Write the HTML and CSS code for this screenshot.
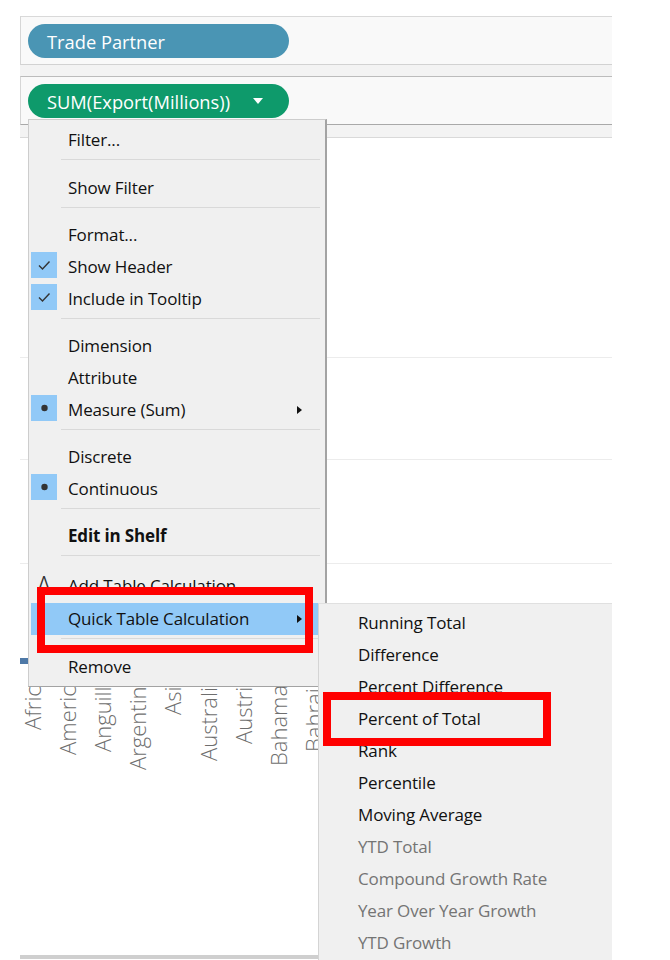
FILE: index.html
```html
<!DOCTYPE html>
<html lang="en">
<head>
<meta charset="utf-8">
<title>Quick Table Calculation</title>
<link rel="stylesheet" href="styles.css">
</head>
<body>
<div class="viz">
  <div class="shelves">
    <div class="shelf shelf-rows">
      <span class="pill pill-dim">Trade Partner</span>
    </div>
    <div class="shelf-gap"></div>
    <div class="shelf shelf-cols">
      <span class="pill pill-meas">SUM(Export(Millions))
        <svg class="pill-caret" width="10" height="6" viewBox="0 0 10 6"><path d="M0 0 L10 0 L5 6 Z" fill="#fff"/></svg>
      </span>
    </div>
    <div class="shelf-gap shelf-gap-last"></div>
  </div>

  <div class="pane">
    <div class="pane-row row-1"></div>
    <div class="pane-row row-2"></div>
    <div class="pane-row row-3"></div>
    <div class="pane-row row-4"><span class="mark"></span></div>
  </div>

  <div class="axis">
    <div class="tick"><span>Africa</span></div>
    <div class="tick"><span>America</span></div>
    <div class="tick"><span>Anguilla</span></div>
    <div class="tick"><span>Argentina</span></div>
    <div class="tick"><span>Asia</span></div>
    <div class="tick"><span>Australia</span></div>
    <div class="tick"><span>Austria</span></div>
    <div class="tick"><span>Bahamas</span></div>
    <div class="tick"><span>Bahrain</span></div>
  </div>
  <div class="hscroll"></div>

  <div class="menu">
    <div class="mi">Filter...</div>
    <div class="sep sep-wide"></div>
    <div class="mi">Show Filter</div>
    <div class="sep"></div>
    <div class="mi">Format...</div>
    <div class="mi"><span class="ico on"><svg width="26" height="26" viewBox="0 0 26 26"><path d="M8 13.5 L11.5 17 L18.5 9.5" fill="none" stroke="#333" stroke-width="1.4"/></svg></span>Show Header</div>
    <div class="mi"><span class="ico on"><svg width="26" height="26" viewBox="0 0 26 26"><path d="M8 13.5 L11.5 17 L18.5 9.5" fill="none" stroke="#333" stroke-width="1.4"/></svg></span>Include in Tooltip</div>
    <div class="sep"></div>
    <div class="mi">Dimension</div>
    <div class="mi">Attribute</div>
    <div class="mi"><span class="ico on"><svg width="26" height="26" viewBox="0 0 26 26"><circle cx="13.5" cy="13" r="3.2" fill="#333"/></svg></span>Measure (Sum)<span class="sub-arrow"></span></div>
    <div class="sep"></div>
    <div class="mi">Discrete</div>
    <div class="mi"><span class="ico on"><svg width="26" height="26" viewBox="0 0 26 26"><circle cx="13.5" cy="13" r="3.2" fill="#333"/></svg></span>Continuous</div>
    <div class="sep"></div>
    <div class="mi mi-bold">Edit in Shelf</div>
    <div class="sep sep-wide"></div>
    <div class="mi mi-tall"><span class="ico delta">Δ</span>Add Table Calculation</div>
    <div class="mi mi-hot">Quick Table Calculation<span class="sub-arrow"></span></div>
    <div class="sep sep-wide"></div>
    <div class="mi">Remove</div>
  </div>

  <div class="submenu">
    <div class="si">Running Total</div>
    <div class="si">Difference</div>
    <div class="si">Percent Difference</div>
    <div class="si">Percent of Total</div>
    <div class="si">Rank</div>
    <div class="si">Percentile</div>
    <div class="si">Moving Average</div>
    <div class="si si-off">YTD Total</div>
    <div class="si si-off">Compound Growth Rate</div>
    <div class="si si-off">Year Over Year Growth</div>
    <div class="si si-off">YTD Growth</div>
  </div>

  <div class="callout callout-quick"></div>
  <div class="callout callout-percent"></div>
</div>
</body>
</html>
```

FILE: styles.css
```css
* { box-sizing: border-box; }

html, body {
  margin: 0;
  padding: 0;
  background: #ffffff;
}

.viz {
  position: relative;
  width: 670px;
  height: 960px;
  overflow: hidden;
  display: flex;
  flex-direction: column;
  font-family: "Open Sans", "Noto Sans", sans-serif;
  color: #111;
}

/* ---------- shelves ---------- */
.shelves {
  margin: 16px 58px 0 20px;
}

.shelf {
  height: 49px;
  padding: 7px 0 0 7px;
  background: #f9f9f9;
  border-left: 1px solid #d6d6d6;
}

.shelf-rows {
  border-top: 1px solid #d9d9d9;
  border-bottom: 1px solid #d2d2d2;
}

.shelf-cols {
  border-top: 1px solid #bcbcbc;
  border-bottom: 1px solid #a9a9a9;
}

.shelf-gap {
  height: 11px;
  background: #f3f3f3;
}

.shelf-gap-last {
  height: 13px;
  border-bottom: 1px solid #d9d9d9;
}

.pill {
  display: flex;
  align-items: center;
  width: 261px;
  height: 34px;
  padding-left: 19px;
  border-radius: 17px;
  color: #ffffff;
  font-size: 18.3px;
  white-space: nowrap;
}

.pill-dim { background: #4a95b4; }
.pill-meas { background: #0e9a6b; }

.pill-caret {
  margin-left: auto;
  margin-right: 26px;
}

/* ---------- pane ---------- */
.pane {
  margin: 0 58px 0 20px;
}

.pane-row { border-bottom: 1px solid #ececec; }
.row-1 { height: 220px; }
.row-2 { height: 102px; }
.row-3 { height: 104px; }
.row-4 {
  height: 100px;
  border-bottom: 0;
  display: flex;
  align-items: flex-end;
}

.mark {
  width: 8px;
  height: 6px;
  background: #4e79a7;
}

/* ---------- axis ---------- */
.axis {
  flex: 1;
  display: flex;
  padding: 11px 0 0 14px;
}

.tick {
  width: 35.2px;
  display: flex;
  justify-content: center;
}

.tick span {
  writing-mode: vertical-rl;
  transform: rotate(180deg);
  text-align: end;
  height: 130px;
  font-size: 22px;
  font-weight: 300;
  line-height: 24px;
  color: #6e6e6e;
  white-space: nowrap;
}

.hscroll {
  height: 4px;
  margin: 0 58px 1px 20px;
  background: #cfcfcf;
}

/* ---------- context menu ---------- */
.menu {
  position: absolute;
  left: 28px;
  top: 119px;
  width: 299px;
  height: 568px;
  padding-top: 4px;
  background: #f0f0f0;
  border: 1px solid #cdcdcd;
  border-right: 2px solid #a3a3a3;
  border-bottom: 1px solid #a3a3a3;
}

.mi {
  position: relative;
  height: 32px;
  display: flex;
  align-items: center;
  padding-left: 39px;
  padding-bottom: 1px;
  font-size: 17px;
  letter-spacing: -0.15px;
  white-space: nowrap;
  color: #111;
}

.mi-tall { height: 35px; }

.mi-bold { font-weight: 700; }

.mi-hot {
  margin: 0 7px 0 2px;
  padding-left: 37px;
  background: #91c9f7;
}

.ico {
  position: absolute;
  left: 2px;
  top: 1px;
  width: 26px;
  height: 26px;
  display: flex;
  align-items: center;
  justify-content: center;
}

.ico.on { background: #91c9f7; }

.delta {
  font-size: 18px;
  color: #333;
}

.sub-arrow {
  position: absolute;
  right: 23px;
  top: 12px;
  width: 0;
  height: 0;
  border-left: 5px solid #111;
  border-top: 4px solid transparent;
  border-bottom: 4px solid transparent;
}

.mi-hot .sub-arrow { right: 16px; }

.sep {
  height: 15px;
  padding: 3px 5px 0 32px;
}

.sep-wide { height: 16px; }

.sep::before {
  content: "";
  display: block;
  border-top: 1px solid #d9d9d9;
}

/* ---------- submenu ---------- */
.submenu {
  position: absolute;
  left: 318px;
  top: 603px;
  width: 294px;
  height: 357px;
  padding-top: 3px;
  background: #f0f0f0;
  border-left: 1px solid #d4d4d4;
  border-top: 1px solid #e0e0e0;
}

.si {
  height: 32px;
  display: flex;
  align-items: center;
  padding-left: 39px;
  padding-bottom: 1px;
  font-size: 17px;
  letter-spacing: -0.15px;
  white-space: nowrap;
  color: #111;
}

.si-off { color: #747474; }

/* ---------- annotations ---------- */
.callout {
  position: absolute;
  border: 8px solid #ff0000;
}

.callout-quick {
  left: 37px;
  top: 587px;
  width: 276px;
  height: 66px;
}

.callout-percent {
  left: 323px;
  top: 692px;
  width: 228px;
  height: 54px;
}
```
